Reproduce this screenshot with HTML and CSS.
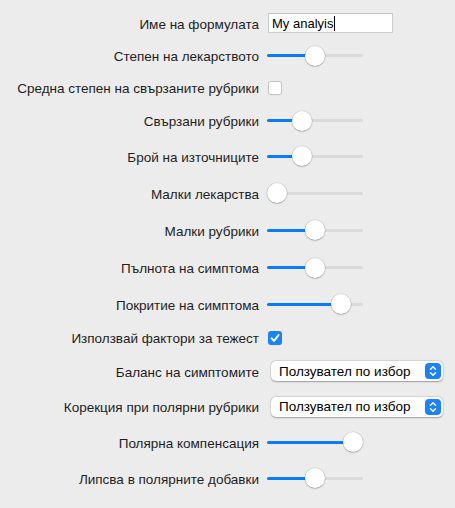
FILE: index.html
```html
<!DOCTYPE html>
<html lang="bg">
<head>
<meta charset="utf-8">
<link rel="stylesheet" href="styles.css">
</head>
<body>
<div class="form">
  <div class="lbl">Име на формулата</div>
  <div class="ctl"><div class="textfield">My analyis<span class="caret"></span></div></div>

  <div class="lbl">Степен на лекарството</div>
  <div class="ctl"><div class="slider" style="--v:0.5"><div class="track"></div><div class="fill"></div><div class="knob"></div></div></div>

  <div class="lbl">Средна степен на свързаните рубрики</div>
  <div class="ctl"><div class="checkbox"></div></div>

  <div class="lbl">Свързани рубрики</div>
  <div class="ctl"><div class="slider" style="--v:0.333"><div class="track"></div><div class="fill"></div><div class="knob"></div></div></div>

  <div class="lbl">Брой на източниците</div>
  <div class="ctl"><div class="slider" style="--v:0.333"><div class="track"></div><div class="fill"></div><div class="knob"></div></div></div>

  <div class="lbl">Малки лекарства</div>
  <div class="ctl"><div class="slider" style="--v:0"><div class="track"></div><div class="fill"></div><div class="knob"></div></div></div>

  <div class="lbl">Малки рубрики</div>
  <div class="ctl"><div class="slider" style="--v:0.5"><div class="track"></div><div class="fill"></div><div class="knob"></div></div></div>

  <div class="lbl">Пълнота на симптома</div>
  <div class="ctl"><div class="slider" style="--v:0.5"><div class="track"></div><div class="fill"></div><div class="knob"></div></div></div>

  <div class="lbl">Покритие на симптома</div>
  <div class="ctl"><div class="slider" style="--v:0.84"><div class="track"></div><div class="fill"></div><div class="knob"></div></div></div>

  <div class="lbl">Използвай фактори за тежест</div>
  <div class="ctl"><div class="checkbox checked"><svg viewBox="0 0 14 14" width="14" height="14"><path d="M3.6 7.4 L6 9.8 L10.6 4" fill="none" stroke="#fff" stroke-width="2" stroke-linecap="round" stroke-linejoin="round"/></svg></div></div>

  <div class="lbl">Баланс на симптомите</div>
  <div class="ctl"><div class="popup"><span class="popup-text">Ползувател по избор</span><span class="stepper"><svg viewBox="0 0 16 16" width="16" height="16"><path d="M5.5 6.2 L8 3.8 L10.5 6.2 M5.5 9.8 L8 12.2 L10.5 9.8" fill="none" stroke="#fff" stroke-width="1.5" stroke-linecap="round" stroke-linejoin="round"/></svg></span></div></div>

  <div class="lbl">Корекция при полярни рубрики</div>
  <div class="ctl"><div class="popup"><span class="popup-text">Ползувател по избор</span><span class="stepper"><svg viewBox="0 0 16 16" width="16" height="16"><path d="M5.5 6.2 L8 3.8 L10.5 6.2 M5.5 9.8 L8 12.2 L10.5 9.8" fill="none" stroke="#fff" stroke-width="1.5" stroke-linecap="round" stroke-linejoin="round"/></svg></span></div></div>

  <div class="lbl">Полярна компенсация</div>
  <div class="ctl"><div class="slider" style="--v:1"><div class="track"></div><div class="fill"></div><div class="knob"></div></div></div>

  <div class="lbl">Липсва в полярните добавки</div>
  <div class="ctl"><div class="slider" style="--v:0.5"><div class="track"></div><div class="fill"></div><div class="knob"></div></div></div>
</div>
</body>
</html>
```

FILE: styles.css
```css
html, body {
  margin: 0;
  padding: 0;
  background: #ececec;
}
body {
  width: 455px;
  height: 508px;
  overflow: hidden;
  font-family: "Liberation Sans", Arial, sans-serif;
  font-size: 13.5px;
  color: #1e1e1e;
}
.form {
  display: grid;
  grid-template-columns: 260px 1fr;
  grid-template-rows: 33px 32px 32px 34px 37px 37px 37px 38px 35px 32px 35px 36px 35px 37px;
  column-gap: 7px;
  padding-top: 6.5px;
}
.lbl {
  display: flex;
  align-items: center;
  justify-content: flex-end;
  white-space: nowrap;
  padding-right: 1px;
  padding-top: 2px;
}
.ctl {
  display: flex;
  align-items: center;
}
.textfield {
  box-sizing: border-box;
  width: 125px;
  height: 20px;
  margin-left: 1px;
  background: #fff;
  border: 1px solid #cdcdcd;
  border-top-color: #c2c2c2;
  padding: 0 3px;
  display: flex;
  align-items: center;
  color: #000;
  font-size: 13px;
}
.caret {
  display: inline-block;
  width: 1px;
  height: 15px;
  background: #000;
  margin-left: 1px;
}
.slider {
  position: relative;
  width: 96px;
  height: 20px;
}
.track, .fill {
  position: absolute;
  left: 0;
  top: 8.5px;
  height: 3px;
  border-radius: 2px;
}
.track {
  width: 100%;
  background: #dadada;
}
.fill {
  width: calc(10px + var(--v) * 76px);
  background: #0a7bfc;
}
.knob {
  position: absolute;
  top: 0;
  left: calc(var(--v) * 76px);
  width: 20px;
  height: 20px;
  border-radius: 50%;
  background: #fff;
  box-shadow: 0 0.5px 1.5px rgba(0,0,0,0.35), 0 0 0 0.5px rgba(0,0,0,0.08);
}
.checkbox {
  box-sizing: border-box;
  width: 14px;
  height: 14px;
  margin-left: 1px;
  border-radius: 3px;
  background: #fff;
  border: 1px solid #c4c4c4;
  box-shadow: 0 0.5px 0.5px rgba(0,0,0,0.05);
}
.checkbox.checked {
  border: none;
  background: #1a82fb;
  display: flex;
}
.popup {
  box-sizing: border-box;
  width: 172px;
  height: 20px;
  margin-left: 4px;
  background: #fff;
  border-radius: 5px;
  box-shadow: 0 0.5px 1.5px rgba(0,0,0,0.3), 0 0 0 0.5px rgba(0,0,0,0.08);
  display: flex;
  align-items: center;
  justify-content: space-between;
  padding: 0 2px 0 8px;
  font-size: 13.5px;
}
.popup-text {
  color: #000;
}
.stepper {
  width: 16px;
  height: 16px;
  border-radius: 4px;
  background: #1a82fb;
  display: flex;
}
```
